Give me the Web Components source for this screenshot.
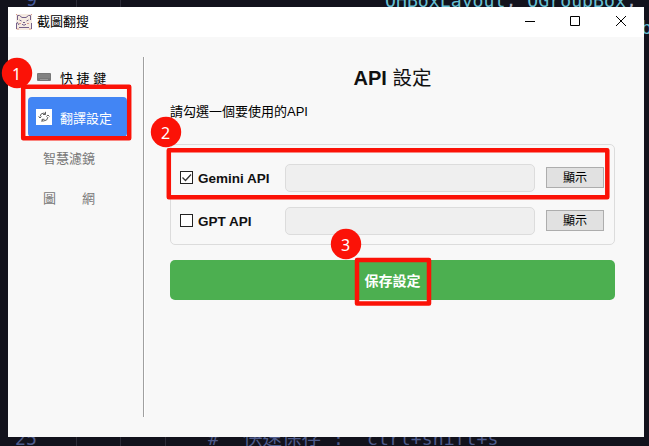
<!DOCTYPE html>
<html lang="zh-Hant"><head><meta charset="utf-8"><title>截圖翻搜</title>
<style>
html,body{margin:0;width:649px;height:446px;overflow:hidden}
body{font-family:"Liberation Sans","Noto Sans CJK TC",sans-serif}
</style></head><body>
<api-page></api-page>
<script>
const define=(name,html)=>customElements.define(name,class extends HTMLElement{
  constructor(){super();this.attachShadow({mode:'open'}).innerHTML=html;}
});

/* Editor visible around the window */
define('code-backdrop',`<style>
:host{position:absolute;inset:0;display:block;background:#12121c;overflow:hidden}
svg{display:block}
text{font-family:"DejaVu Sans Mono","Noto Sans CJK TC",monospace;font-size:18.2px;white-space:pre}
</style><svg width="649" height="446">
<path d="M76.5 0V446M120.5 0V446M165.5 437V446" stroke="#2c2c38" fill="none"/>
<text x="26" y="6" fill="#465a9c">9</text>
<text x="385" y="7" fill="#67bfd2">QHBoxLayout<tspan fill="#a8b0c4">,</tspan> QGroupBox<tspan fill="#a8b0c4">,</tspan></text>
<text x="641" y="34" fill="#67bfd2">b</text>
<text x="15" y="445" fill="#4e5b8b">25</text>
<text x="208" y="445" fill="#4e5b8b">#</text>
<text x="243" y="445" fill="#4e5b8b" style="font-size:19.5px">快速保存</text>
<text x="333" y="445" fill="#4e5b8b">:</text>
<text x="367" y="445" fill="#4e5b8b">ctrl+shift+s</text>
</svg>`);

define('title-bar',`<style>
:host{display:flex;height:30px;background:#fff;align-items:center;padding-left:8px;box-sizing:border-box}
.t{flex:1;font-size:13px;line-height:30px;margin-left:5px;color:#000}
.c{margin-right:16px}svg{display:block}
</style>
<svg width="16" height="16" viewBox="0 0 16 16"><path fill="#f5ebe2" d="M0 0h16v16H0z"/>
<path fill="none" stroke="#74608a" d="M1.5 6V1.5h2L6 3.5h4l2.500-2h2V6M.5 9v6M15.500 9v6M3.500 6l2 1M12.500 6l-2 1M6 10l1 1h2l1-1M7 8.500h2M3 13.500h10M1 8l2 3"/>
<path fill="none" stroke="#d89b91" d="M3 9.500h2M11 9.500h2M0 1l1-1M15 0l1 1M1 15h2M13 15h2"/></svg>
<span class="t"><slot></slot></span>
<svg class="c" width="103" height="12" viewBox="0 0 103 12" fill="none" stroke="#000"><path d="M0 5.500h10"/><path d="M45.500 .5h9v9h-9z"/><path d="M91 0l10 10M101 0L91 10"/></svg>`);

define('nav-item',`<style>
:host{display:flex;height:40px;box-sizing:border-box;padding-left:8px;align-items:center;font-size:13px;color:#777;white-space:pre;border-radius:4px}
:host([first]){color:#000}
:host([active]){background:#4285f4;color:#fff}
::slotted(svg){display:block;margin-right:8px;flex:none}
.l{line-height:20px;padding-top:4px}
:host([plain]){padding-left:15px}
</style><slot name="icon"></slot><span class="l"><slot></slot></span>`);

define('side-nav',`<style>
:host{display:flex;flex-direction:column;width:116px;box-sizing:border-box;padding:0 16px 0 0;margin:20px 0 20px 20px;border-right:1px solid #a0a0a0;box-shadow:1px 0 #fff}
</style>
<nav-item first><svg slot="icon" width="16" height="16"><rect x="1" y="4" width="14" height="8" rx="1" fill="#777"/><path d="M2.500 6h11M2.500 8h11" stroke="#a4a4a4" stroke-dasharray="1 1"/><path d="M4 10.500h8" stroke="#999"/></svg>快 捷 鍵</nav-item>
<nav-item active><svg slot="icon" width="16" height="16"><path fill="#fff" d="M0 0h16v16H0z"/><path d="M4 7.500Q4.500 4 8 4l1.500 1M9.500 2.800V5.500H7M12 8q-.5 4-4.500 4L6 11M6 13V10.300h2.500M2.500 7.500L4 9l1.500-1.500M10.300 7.500L12 6l1.500 1.500" fill="none" stroke="#606060" stroke-width="1"/></svg>翻譯設定</nav-item>
<nav-item plain>智慧濾鏡</nav-item>
<nav-item plain><span style="display:inline-flex;width:52px;justify-content:space-between"><span>圖</span><span>網</span></span></nav-item>`);

define('api-row',`<style>
:host{display:flex;align-items:center;height:28px}
.b{box-sizing:border-box;width:13px;height:13px;border:1px solid #222;background:#fff;margin:-1px 5px 0 0}
.b svg{display:none}:host([checked]) .b svg{display:block}
.n{width:87px;font-weight:bold;font-size:13.5px;line-height:28px;padding-top:1px;color:#111}
.i{box-sizing:border-box;width:250px;height:28px;border:1px solid #dcdcdc;border-radius:5px;background:#efefef;margin-right:11px}
.s{box-sizing:border-box;width:58px;height:21px;border:1px solid #adadad;background:#e1e1e1;text-align:center;font-size:12px;line-height:20px;color:#000;margin-top:-1px}
</style><span class="b"><svg width="11" height="11"><path d="M1.500 5.500l3 3L10 2.500" fill="none" stroke="#333" stroke-width="1.300"/></svg></span><span class="n"><slot></slot></span><span class="i"></span><span class="s">顯示</span>`);

define('api-panel',`<style>
:host{display:flex;flex-direction:column;flex:1;padding:26px 29px 0 26px}
h1{margin:0;text-align:center;font-size:20px;line-height:30px;color:#111}
h1 span{font-weight:400;font-size:19.5px}
p{margin:9px 0 0;font-size:13px;line-height:20px;color:#000}
.g{margin-top:22px;box-sizing:border-box;height:101px;border:1px solid #dcdcdc;border-radius:5px;padding:19px 9px;display:flex;flex-direction:column;gap:15px}
.save{margin-top:15px;height:40px;border-radius:5px;background:#4caf50;color:#fff;text-align:center;font-weight:bold;font-size:14px;line-height:42px}
</style><h1>API <span>設定</span></h1><p>請勾選一個要使用的API</p>
<div class="g"><api-row checked>Gemini API</api-row><api-row>GPT API</api-row></div>
<div class="save">保存設定</div>`);

define('app-window',`<style>
:host{position:absolute;left:8px;top:7px;width:636px;height:430px;background:#f8f8f8;display:flex;flex-direction:column}
.m{flex:1;display:flex}
</style><title-bar>截圖翻搜</title-bar><div class="m"><side-nav></side-nav><api-panel></api-panel></div>`);

/* Numbered callouts drawn over the window */
define('step-marks',`<style>
:host{position:absolute;inset:0;display:block}
svg{display:block}
text{font:16px "Noto Sans",sans-serif;fill:#fff;text-anchor:middle}
</style><svg width="649" height="446">
<g fill="none" stroke="#fb1207" stroke-width="4.500" stroke-linejoin="round">
<rect x="23.200" y="86.700" width="106" height="51.500"/><rect x="168.800" y="150.200" width="438.500" height="47"/><rect x="357" y="260" width="72" height="43.500"/></g>
<g fill="#fb1207"><circle cx="17" cy="73" r="15.200"/><circle cx="166" cy="132" r="15.200"/><circle cx="346" cy="244" r="15.200"/></g>
<text x="16.500" y="79.500">1</text><text x="165.500" y="138.500">2</text><text x="345.500" y="250.500">3</text></svg>`);

define('api-page',`<style>:host{display:block;position:relative;width:649px;height:446px;overflow:hidden}</style>
<code-backdrop></code-backdrop><app-window></app-window><step-marks></step-marks>`);
</script></body></html>
